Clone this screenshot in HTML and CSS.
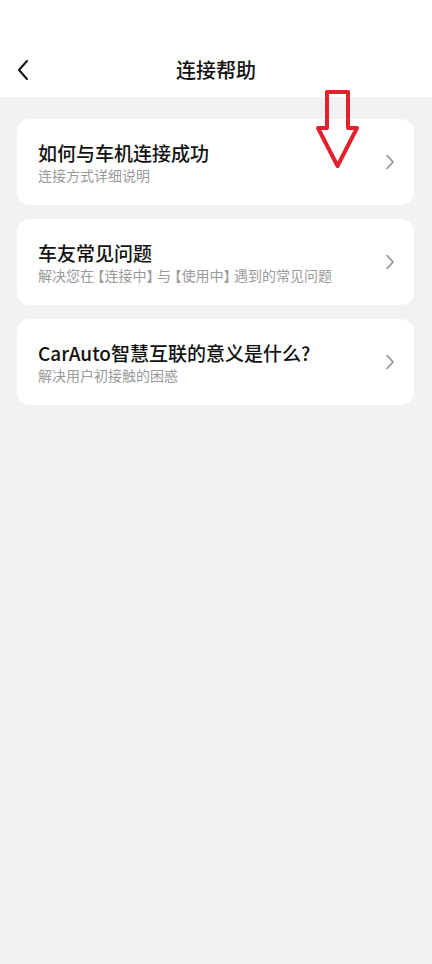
FILE: index.html
```html
<!DOCTYPE html>
<html lang="zh-CN">
<head>
<meta charset="utf-8">
<title>连接帮助</title>
<link rel="stylesheet" href="styles.css">
</head>
<body>
<div class="page">
  <header class="header">
    <svg class="back" width="14" height="22" viewBox="0 0 14 22"><path d="M11 2 L3 11 L11 20" fill="none" stroke="#111" stroke-width="2" stroke-linecap="round" stroke-linejoin="round"/></svg>
    <div class="title">连接帮助</div>
  </header>
  <main class="list">
    <div class="card">
      <div class="texts">
        <div class="card-title">如何与车机连接成功</div>
        <div class="card-sub">连接方式详细说明</div>
      </div>
      <svg class="chev" width="10" height="16" viewBox="0 0 10 16"><path d="M2 1.5 L8 8 L2 14.5" fill="none" stroke="#8a8a8a" stroke-width="1.5" stroke-linecap="round" stroke-linejoin="round"/></svg>
    </div>
    <div class="card">
      <div class="texts">
        <div class="card-title">车友常见问题</div>
        <div class="card-sub">解决您在<span class="lb">【</span>连接中<span class="rb">】</span>与<span class="lb">【</span>使用中<span class="rb">】</span>遇到的常见问题</div>
      </div>
      <svg class="chev" width="10" height="16" viewBox="0 0 10 16"><path d="M2 1.5 L8 8 L2 14.5" fill="none" stroke="#8a8a8a" stroke-width="1.5" stroke-linecap="round" stroke-linejoin="round"/></svg>
    </div>
    <div class="card">
      <div class="texts">
        <div class="card-title">CarAuto智慧互联的意义是什么?</div>
        <div class="card-sub">解决用户初接触的困惑</div>
      </div>
      <svg class="chev" width="10" height="16" viewBox="0 0 10 16"><path d="M2 1.5 L8 8 L2 14.5" fill="none" stroke="#8a8a8a" stroke-width="1.5" stroke-linecap="round" stroke-linejoin="round"/></svg>
    </div>
  </main>
  <svg class="arrow" width="60" height="90" viewBox="310 85 60 90"><polygon points="327,92 348,92 348,128 357,128 337.5,166 318,128 327,128" fill="none" stroke="#e3202b" stroke-width="4" stroke-linejoin="round"/></svg>
</div>
</body>
</html>
```

FILE: styles.css
```css
html, body {
  margin: 0;
  padding: 0;
  background: #f2f2f2;
}
body {
  font-family: "Noto Sans CJK SC", "Noto Sans", sans-serif;
}
.page {
  position: relative;
  width: 432px;
  min-height: 964px;
  background: #f2f2f2;
}
.header {
  height: 97px;
  background: #ffffff;
  box-sizing: border-box;
  padding-top: 56px;
  position: relative;
}
.title {
  text-align: center;
  font-size: 20px;
  line-height: 28px;
  font-weight: 500;
  color: #111;
}
.back {
  position: absolute;
  left: 16px;
  top: 59px;
}
.list {
  display: flex;
  flex-direction: column;
  gap: 14px;
  padding: 22px 18px 0 17px;
}
.card {
  height: 86px;
  background: #fff;
  border-radius: 13px;
  display: flex;
  align-items: center;
  justify-content: space-between;
  padding: 0 19px 0 21px;
  box-sizing: border-box;
}
.texts {
  display: flex;
  flex-direction: column;
  padding-top: 1px;
}
.card-title {
  font-size: 19px;
  line-height: 25px;
  font-weight: 500;
  color: #111;
}
.card-sub {
  font-size: 14px;
  line-height: 20px;
  color: #9a9a9a;
}
.lb {
  margin-left: -3.5px;
}
.rb {
  margin-right: -3.5px;
}
.chev {
  flex: none;
}
.arrow {
  position: absolute;
  left: 310px;
  top: 85px;
}
```
